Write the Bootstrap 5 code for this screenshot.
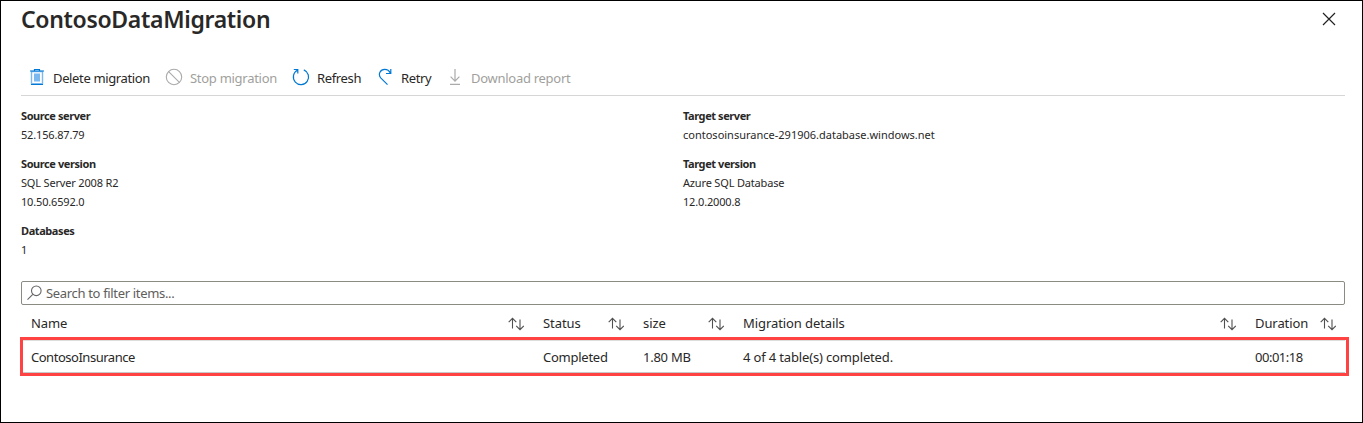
<!DOCTYPE html>
<html lang="en">
<head>
<meta charset="utf-8">
<title>ContosoDataMigration</title>
<link href="https://cdn.jsdelivr.net/npm/bootstrap@5.3.0/dist/css/bootstrap.min.css" rel="stylesheet">
<style>
body{font-family:"Noto Sans","Open Sans",sans-serif;font-size:13px;line-height:20px;color:#292827;height:423px;overflow:hidden}
.blade{height:423px;border:1px solid #000;padding:0 17px 0 20px}
.blade-title{font-size:23px;line-height:36px;font-weight:600;margin:0;letter-spacing:-.32px}
.close-btn{width:14px;height:14px;margin:11px 9px 0 0}
.commands{height:35px;margin:24px 0 0;border-bottom:1px solid #d6d6d6}
.commands .cmd{padding:0;border:0;color:inherit;font-size:13px;line-height:20px;height:34px;display:flex;align-items:center;white-space:nowrap;letter-spacing:-.36px}
.commands .cmd:disabled{color:#a19f9d;opacity:1;border:0;letter-spacing:-.28px}
.cmd svg{flex:none;margin-top:-3px}
.props{font-size:11px;line-height:19px;margin-top:10px;letter-spacing:-.17px}
.props dt{font-weight:700;letter-spacing:-.42px}
.props dd{margin:0 0 10px}
.props .host{letter-spacing:0}
.search{height:24px;border:1px solid #8a8c84;border-radius:2px;padding:0 5px;color:#605e5c;margin-top:12px;letter-spacing:-.33px}
.grid-row{display:grid;grid-template-columns:512px 100px 100px 512px 1fr;padding-left:10px;white-space:nowrap}
.grid-head{height:32px;padding-top:8px;letter-spacing:-.08px}
.sort{margin:4px 19px 0 0}
.grid-head>div:last-child .sort{margin-right:9px}
.result{height:39px;border:3px solid #ff4343;margin:0 -4px 0 -1px}
.result .grid-row{height:33px;padding:6px 0 0 8px;margin-right:1px;border-top:1px solid #ddd;border-bottom:1px solid #c8c8c8;letter-spacing:-.25px}
.result .tight{letter-spacing:-.48px}
.result .details{letter-spacing:-.15px}
</style>
</head>
<body>
<svg class="d-none"><symbol id="sort" viewBox="0 0 16 14"><path d="M4.5 11.5V1.5M.7 5.2 4.5 1.4l3.8 3.8M12 2.5v10M8.2 8.8 12 12.6l3.8-3.8" fill="none" stroke="#505050" stroke-width="1.1"/></symbol></svg>
<main class="blade d-flex flex-column">
<header class="d-flex justify-content-between align-items-start"><h1 class="blade-title">ContosoDataMigration</h1>
<svg class="close-btn" viewBox="0 0 14 14"><path d="M1 1l12 12M13 1L1 13" stroke="#222" stroke-width="1.2"/></svg></header>
<nav class="commands d-flex">
<button class="btn cmd" style="width:145px"><svg class="ms-2" width="16" height="18" viewBox="0 0 16 18"><path d="M2.5 3.5h11v12.2h-11z" fill="#fff" stroke="#7bb8ef" stroke-width="1.4"/><path d="M5 5.5h6v8H5z" fill="#7bb8ef"/><path d="M1 3h14M5.5 2.5v-1h5v1M2 16.5h12" fill="none" stroke="#0078d4" stroke-width="1.2"/></svg><span style="margin-left:8px">Delete migration</span></button>
<button class="btn cmd" style="width:126px" disabled><svg width="18" height="18" viewBox="0 0 18 18" style="margin-left:-1px"><g fill="none" stroke="#aaa" stroke-width="1.1"><circle cx="9" cy="9" r="7.7"/><path d="M3.6 3.6l10.8 10.8"/></g></svg><span style="margin-left:7px">Stop migration</span></button>
<button class="btn cmd" style="width:86px"><svg width="18" height="18" viewBox="0 0 18 18"><path d="M5.3 2.3A7.6 7.6 0 1 0 11.8 1.9M1.8 1.5h4v4" fill="none" stroke="#0078d4" stroke-width="1.2"/></svg><span style="margin-left:7px">Refresh</span></button>
<button class="btn cmd" style="width:70px"><svg width="16" height="18" viewBox="0 0 16 18"><path d="M9.5 16.7 2.7 9.8C-.2 6.3 2.2 1.3 6.7 1.3c2.8 0 4.6 1.5 5.6 3.8M12.8 1v4.5H8" fill="none" stroke="#0078d4" stroke-width="1.2"/></svg><span style="margin-left:7px">Retry</span></button>
<button class="btn cmd" disabled><svg width="14" height="18" viewBox="0 0 14 18"><path d="M7 1v12M2.6 8.7 7 13.1l4.4-4.4M2 16.4h10" fill="none" stroke="#aaa" stroke-width="1.2"/></svg><span style="margin-left:9px">Download report</span></button>
</nav>
<section class="props row gx-0">
<dl class="col-6 mb-0"><dt>Source server</dt><dd>52.156.87.79</dd><dt>Source version</dt><dd>SQL Server 2008 R2<br>10.50.6592.0</dd><dt>Databases</dt><dd>1</dd></dl>
<dl class="col-6 mb-0"><dt>Target server</dt><dd class="host">contosoinsurance-291906.database.windows.net</dd><dt>Target version</dt><dd>Azure SQL Database<br>12.0.2000.8</dd></dl>
</section>
<div class="search d-flex align-items-center flex-shrink-0"><svg width="15" height="16" viewBox="0 0 15 16"><g fill="none" stroke="#666" stroke-width="1.1"><circle cx="9.3" cy="5.8" r="4.8"/><path d="M5.8 9.3.5 14.6"/></g></svg><span style="margin-left:4px">Search to filter items...</span></div>
<section>
<div class="grid-row grid-head">
<div class="d-flex justify-content-between"><span>Name</span><svg class="sort" width="16" height="14"><use href="#sort"/></svg></div>
<div class="d-flex justify-content-between"><span>Status</span><svg class="sort" width="16" height="14"><use href="#sort"/></svg></div>
<div class="d-flex justify-content-between"><span>size</span><svg class="sort" width="16" height="14"><use href="#sort"/></svg></div>
<div class="d-flex justify-content-between"><span>Migration details</span><svg class="sort" width="16" height="14"><use href="#sort"/></svg></div>
<div class="d-flex justify-content-between"><span>Duration</span><svg class="sort" width="16" height="14"><use href="#sort"/></svg></div>
</div>
<div class="result"><div class="grid-row"><span class="tight">ContosoInsurance</span><span>Completed</span><span>1.80 MB</span><span class="details">4 of 4 table(s) completed.</span><span class="tight">00:01:18</span></div></div>
</section>
</main>
</body>
</html>
